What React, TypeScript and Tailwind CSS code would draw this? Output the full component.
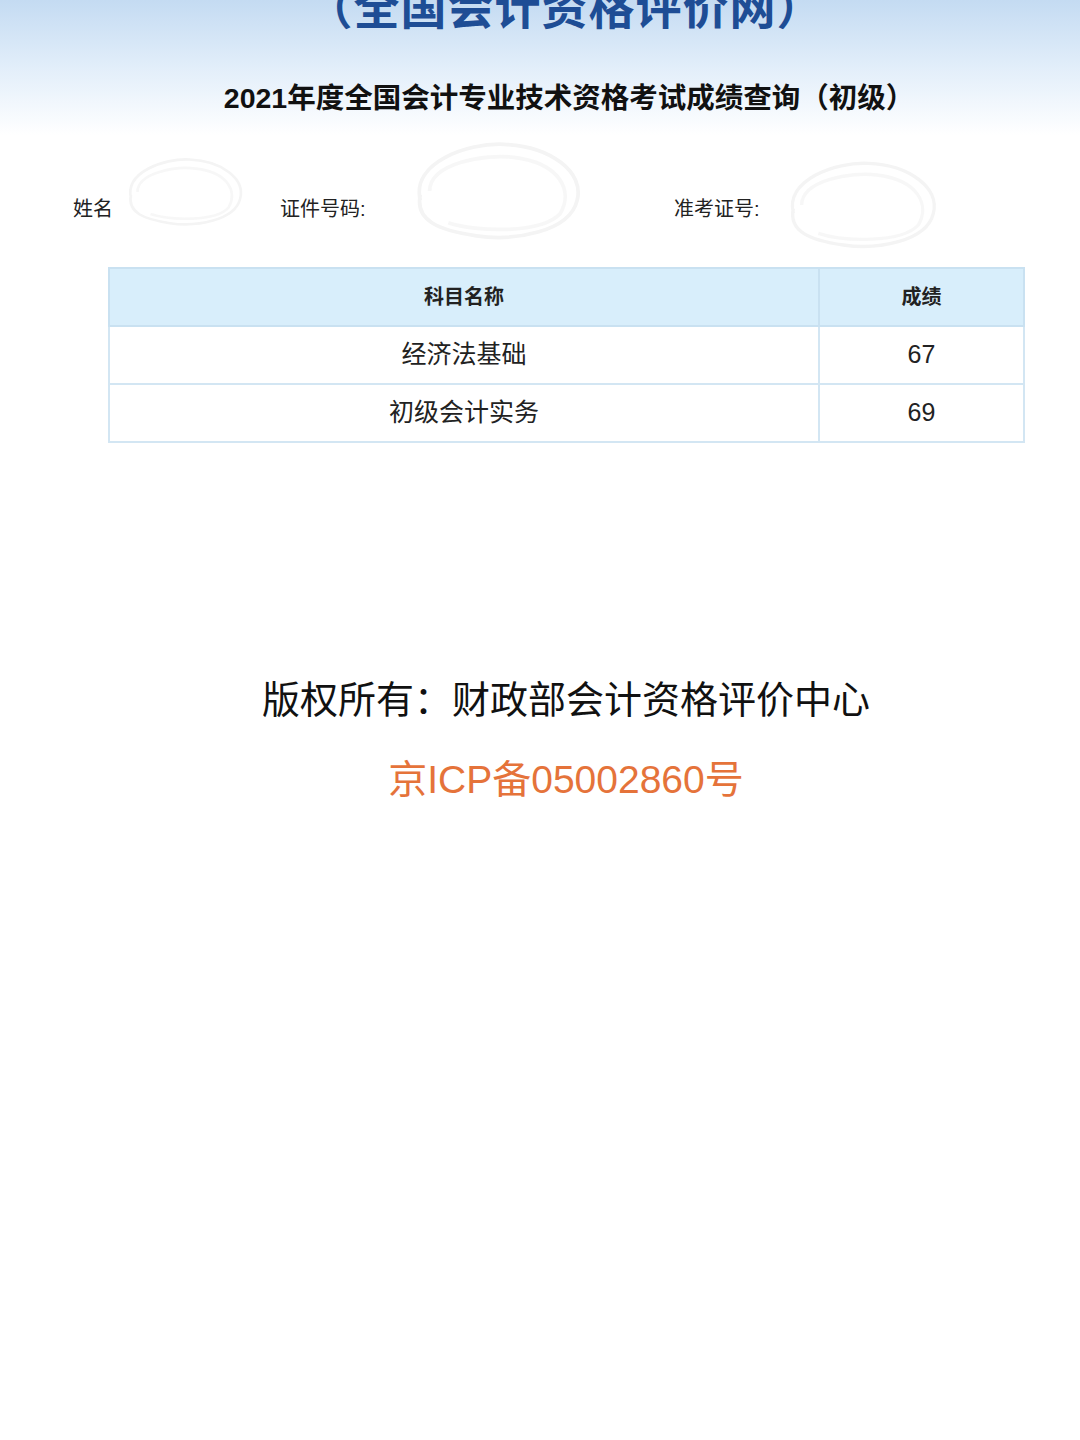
const FONT = { fontFamily: '"Liberation Sans", "Noto Sans CJK SC", sans-serif' };

const rows = [
  { subject: "经济法基础", score: "67" },
  { subject: "初级会计实务", score: "69" },
];

function Scribble({ className }: { className: string }) {
  // faint white-out marks over the personal info
  return (
    <svg
      className={`absolute pointer-events-none ${className}`}
      viewBox="0 0 200 120"
      fill="none"
      stroke="#f4f4f4"
      strokeWidth="4"
    >
      <path d="M20 70 C 10 30, 70 8, 110 10 C 160 12, 196 40, 188 70 C 180 104, 120 114, 80 108 C 40 102, 14 92, 20 64" />
      <path d="M30 60 C 30 30, 90 20, 120 24 C 170 30, 184 60, 170 84 C 150 106, 80 104, 50 94" strokeOpacity="0.7" />
    </svg>
  );
}

export default function App() {
  return (
    <div className="w-[1080px] min-h-[1440px] bg-white overflow-hidden" style={FONT}>
      <div className="h-[135px] bg-gradient-to-b from-[#c4dbf2] via-[#e2eefa] to-white flex flex-col items-center">
        <h1 className="-mt-[15px] ml-[50px] text-[46px] leading-none font-bold text-[#1e4d95] tracking-[1px]">
          （全国会计资格评价网）
        </h1>
        <h2 className="mt-[53px] ml-[58px] text-[28.5px] leading-none font-bold text-[#111]">
          2021年度全国会计专业技术资格考试成绩查询（初级）
        </h2>
      </div>

      <div className="relative h-[132px] flex items-center pl-[73px] text-[20px] text-[#222]">
        <Scribble className="left-[118px] top-[2px] w-[130px] h-[110px]" />
        <Scribble className="left-[378px] top-[0px] w-[234px] h-[112px]" />
        <Scribble className="left-[774px] top-[20px] w-[172px] h-[100px]" />
        <div className="w-[207px] mt-[16px]">姓名</div>
        <div className="w-[394px] mt-[16px]">证件号码:</div>
        <div className="mt-[16px]">准考证号:</div>
      </div>

      <div className="ml-[108px] w-[917px]">
        <table className="w-full border-collapse text-[#222]">
          <thead>
            <tr className="bg-[#d8eefb] h-[58px] text-[20px]">
              <th className="w-[710px] border-2 border-[#c9e1f1] font-bold">科目名称</th>
              <th className="border-2 border-[#c9e1f1] font-bold">成绩</th>
            </tr>
          </thead>
          <tbody>
            {rows.map((r) => (
              <tr key={r.subject} className="h-[58px] text-[25px]">
                <td className="border-2 border-[#d3e6f3] text-center">{r.subject}</td>
                <td className="border-2 border-[#d3e6f3] text-center">{r.score}</td>
              </tr>
            ))}
          </tbody>
        </table>
      </div>

      <div className="mt-[238px] flex flex-col items-center">
        <p className="ml-[52px] text-[38px] leading-none text-[#111]">版权所有：财政部会计资格评价中心</p>
        <p className="mt-[41px] ml-[52px] text-[39px] leading-none text-[#e5733a]">京ICP备05002860号</p>
      </div>
    </div>
  );
}
